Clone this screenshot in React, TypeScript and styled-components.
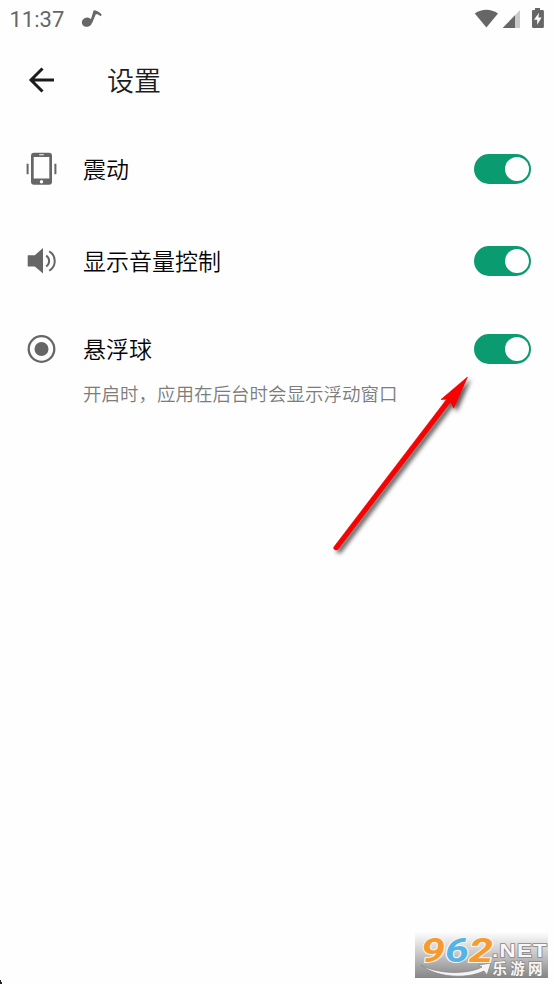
import React, { useState } from "react";
import styled, { createGlobalStyle } from "styled-components";

const GlobalStyle = createGlobalStyle`
  * { box-sizing: border-box; }
  body { margin: 0; background: #fefefe; overflow: hidden; }
  svg { display: block; overflow: visible; }
`;

const Screen = styled.main`
  position: relative;
  display: flex;
  flex-direction: column;
  width: 554px;
  height: 984px;
  background: #fefefe;
  color: #050505;
  font-family: "Noto Sans CJK SC", sans-serif;
`;

const StatusBar = styled.div`
  display: flex;
  align-items: center;
  height: 38px;
  padding: 0 10px 0 9px;
  color: #666;
`;

const Clock = styled.span`
  font: 400 22px/38px Roboto, sans-serif;
  width: 73px;
  padding: 2px 0 0 0.5px;
`;

const StatusIcons = styled.div`
  margin-left: auto;
  display: flex;
`;

const Header = styled.header`
  display: flex;
  align-items: center;
  height: 84px;
  padding-left: 28px;
`;

const BackButton = styled.button`
  width: 79px;
  height: 30px;
  padding: 0;
  border: 0;
  background: none;
  color: #1c1c1c;
`;

const Title = styled.h1`
  margin: 0;
  font-size: 27px;
  line-height: 40px;
  font-weight: 350;
  color: #1c1c1c;
`;

const SettingsList = styled.section`
  display: flex;
  flex-direction: column;
`;

const Row = styled.div<{ $height: number }>`
  display: flex;
  align-items: center;
  height: ${(p) => p.$height}px;
  padding: 0 23px 0 24px;
`;

const IconSlot = styled.div`
  width: 59px;
  color: #666;
`;

const Label = styled.span`
  flex: 1;
  padding-bottom: 2px;
  font-size: 23px;
  font-weight: 350;
  line-height: 34px;
`;

const Description = styled.p`
  margin: -13px 0 0 83px;
  font-size: 18.5px;
  font-weight: 350;
  line-height: 28px;
  color: #7c7c7c;
`;

const Switch = styled.button<{ $on: boolean }>`
  display: flex;
  align-items: center;
  justify-content: ${(p) => (p.$on ? "flex-end" : "flex-start")};
  width: 57px;
  height: 30px;
  padding: 0 2.5px;
  border: 0;
  border-radius: 15px;
  background: ${(p) => (p.$on ? "#0b9b70" : "#aaa")};
`;

const Knob = styled.span`
  width: 24px;
  height: 24px;
  border-radius: 50%;
  background: #fff;
`;

const PointerArrow = styled.svg`
  position: absolute;
  left: 320px;
  top: 365px;
  pointer-events: none;
`;

const Watermark = styled.svg`
  position: absolute;
  left: 415px;
  top: 932px;
`;

const CornerMark = styled.svg`
  position: absolute;
  left: 0;
  top: 979px;
`;

const VibrateIcon = () => (
  <svg width="35" height="36" viewBox="0 0 35 36" fill="currentColor">
    <path fillRule="evenodd" d="M10 1.7h15a3 3 0 0 1 3 3v26a3 3 0 0 1-3 3H10a3 3 0 0 1-3-3v-26a3 3 0 0 1 3-3ZM9.7 6v21.6h15.6V6ZM15.2 3.3v1h4.6v-1ZM17.5 29a1.7 1.7 0 1 0 0 3.4 1.7 1.7 0 0 0 0-3.4Z" />
    <path d="M2.6 12.7h2v10.6h-2ZM30.4 12.7h2v10.6h-2Z" />
  </svg>
);

const VolumeIcon = () => (
  <svg width="35" height="36" viewBox="0 0 35 36" fill="currentColor">
    <path d="M3.7 12.3h7.1L19 5.1v25.5l-8.2-7H3.7Z" />
    <g fill="none" stroke="currentColor" strokeWidth="2">
      <path d="M22.2 12.6c3.9 2.6 3.9 8.2 0 10.8" />
      <path d="M25.2 8.4c7.4 4 7.4 15.2 0 19.2" />
    </g>
  </svg>
);

const BallIcon = () => (
  <svg width="35" height="36" viewBox="0 0 35 36">
    <circle cx="17.5" cy="18" r="12.8" fill="none" stroke="currentColor" strokeWidth="2.3" />
    <circle cx="17.5" cy="18" r="7" fill="currentColor" />
  </svg>
);

const settings = [
  { label: "震动", icon: <VibrateIcon />, height: 94 },
  { label: "显示音量控制", icon: <VolumeIcon />, height: 90 },
  { label: "悬浮球", icon: <BallIcon />, height: 86 },
];

function SettingRow({ label, icon, height }: (typeof settings)[number]) {
  const [on, setOn] = useState(true);
  return (
    <Row $height={height}>
      <IconSlot>{icon}</IconSlot>
      <Label>{label}</Label>
      <Switch $on={on} role="switch" aria-checked={on} aria-label={label} onClick={() => setOn(!on)}>
        <Knob />
      </Switch>
    </Row>
  );
}

export default function App() {
  return (
    <Screen>
      <GlobalStyle />
      <StatusBar>
        <Clock>11:37</Clock>
        <svg width="21" height="20" viewBox="0 0 21 20" fill="currentColor">
          <ellipse cx="4.9" cy="13.2" rx="5.1" ry="4.6" transform="rotate(-12 4.9 13.2)" />
          <path d="m8.2 12.5 3.5-11.2c2.4.2 5.2 1 8 4.2l-1 1.7c-1.6-1.6-3.2-2.2-4.9-2L10 14.2Z" />
        </svg>
        <StatusIcons>
          <svg width="70" height="22" viewBox="0 0 70 22" fill="currentColor">
            <path d="M.8 5.5C8 .6 16.7.6 24 5.5L12.4 19.5Z" />
            <path d="M46 2v18H28.7Z" opacity=".35" />
            <path d="M41 7.2V20H28.7Z" />
            <path fillRule="evenodd" d="M61 0h5v2h2.7q1.2 0 1.2 1.2v15.6q0 1.2-1.2 1.2H59.2q-1.2 0-1.2-1.2V3.2Q58 2 59.2 2H61Zm4 4.7-5 7h3.2v5.1l4.4-7.3h-3.2Z" />
          </svg>
        </StatusIcons>
      </StatusBar>
      <Header>
        <BackButton aria-label="返回">
          <svg width="27" height="30" viewBox="0 0 27 30" fill="none" stroke="currentColor" strokeWidth="3">
            <path d="M14.5 3.5 3 15l11.5 11.5M3 15h23" />
          </svg>
        </BackButton>
        <Title>设置</Title>
      </Header>
      <SettingsList>
        {settings.map((setting) => (
          <SettingRow key={setting.label} {...setting} />
        ))}
        <Description>开启时，应用在后台时会显示浮动窗口</Description>
      </SettingsList>
      <PointerArrow width="160" height="195" viewBox="320 365 160 195">
        <defs>
          <filter id="arrowShadow" x="-20%" y="-20%" width="150%" height="150%">
            <feDropShadow dx="3" dy="3" stdDeviation="2.2" floodColor="#000" floodOpacity=".65" />
          </filter>
        </defs>
        <g filter="url(#arrowShadow)" fill="#fa0202" stroke="#d80808" strokeWidth=".6" strokeLinejoin="round">
          <path d="m334.3 546.4 112.4-147.2-5.7.3 26.5-22.5-13.8 31.2-3-6.2-112.8 147.4q-2.4 1.3-3.8-.3-1-1.5.2-2.7Z" />
        </g>
      </PointerArrow>
      <Watermark width="133" height="46" viewBox="0 0 133 46">
        <defs>
          <linearGradient id="plate" x1="0" y1="0" x2="0" y2="1">
            <stop offset="0" stopColor="#fefefe" />
            <stop offset=".5" stopColor="#c4c4c4" />
            <stop offset="1" stopColor="#858585" />
          </linearGradient>
        </defs>
        <path d="M0 0h133v46H0Z" fill="url(#plate)" />
        <path d="M6 33c16 9 46 10 61 2l-4-2 13-2-4 12-3-4C50 48 20 45 6 33Z" fill="#f4f4f4" stroke="#888" strokeWidth=".8" />
        <g stroke="#f8f4ed" strokeWidth="2" paintOrder="stroke" fontFamily="Roboto, sans-serif" fontWeight="700" fontStyle="italic" fontSize="34">
          <text x="6" y="30" textLength="24" lengthAdjust="spacingAndGlyphs" fill="#f79a2d">9</text>
          <text x="30" y="30" textLength="24" lengthAdjust="spacingAndGlyphs" fill="#55b3e7">6</text>
          <text x="54" y="30" textLength="24" lengthAdjust="spacingAndGlyphs" fill="#f79a2d">2</text>
        </g>
        <g fill="#f7f7f7" stroke="#888" strokeWidth="1.4" paintOrder="stroke" fontWeight="700">
          <text x="77" y="24.5" fontFamily="Liberation Sans, sans-serif" fontSize="17.5" letterSpacing="1" textLength="56" lengthAdjust="spacingAndGlyphs">.NET</text>
          <text x="77.5" y="42" fontFamily="Liberation Sans, Noto Sans CJK SC, sans-serif" fontSize="14.5" textLength="50">乐游网</text>
        </g>
      </Watermark>
      <CornerMark width="3" height="5" viewBox="0 0 3 5">
        <path d="M0 1h1v2h1v2H0Z" fill="#222" />
      </CornerMark>
    </Screen>
  );
}
